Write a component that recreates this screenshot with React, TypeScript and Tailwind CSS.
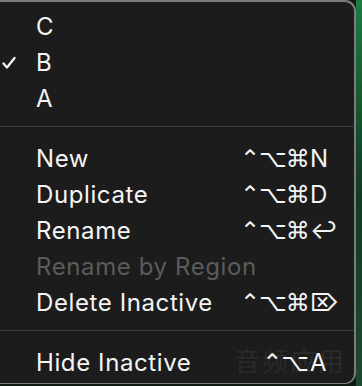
import React from "react";

type Item = {
  label: string;
  mods?: string;
  keyGlyph?: string;
  disabled?: boolean;
  checked?: boolean;
};

const versions: Item[] = [
  { label: "C" },
  { label: "B", checked: true },
  { label: "A" },
];

const actions: Item[] = [
  { label: "New", mods: "⌃⌥⌘", keyGlyph: "N" },
  { label: "Duplicate", mods: "⌃⌥⌘", keyGlyph: "D" },
  { label: "Rename", mods: "⌃⌥⌘", keyGlyph: "↩" },
  { label: "Rename by Region", disabled: true },
  { label: "Delete Inactive", mods: "⌃⌥⌘", keyGlyph: "⌦" },
];

const view: Item[] = [{ label: "Hide Inactive", mods: "⌃⌥", keyGlyph: "A" }];

function Check() {
  return (
    <svg width="14" height="14" viewBox="0 0 14 14" fill="none">
      <path d="M1.5 7.5 L5 11.5 L12.5 2" stroke="#f4f4f4" strokeWidth="2.3" strokeLinecap="round" strokeLinejoin="round" />
    </svg>
  );
}

function Row({ item }: { item: Item }) {
  return (
    <div className="flex h-[36px] items-center pr-[6px]">
      <div className="flex w-[36px] items-center pl-[2px]">{item.checked && <Check />}</div>
      <div
        className={`flex-1 whitespace-nowrap tracking-[0.6px] ${
          item.disabled ? "text-[#5b5b5b]" : "text-[#f4f4f4]"
        }`}
      >
        {item.label}
      </div>
      {item.mods && (
        <div className="flex items-center text-[#f4f4f4]">
          <span className="w-[68px] text-right font-['DejaVu_Sans',sans-serif] text-[24px] tracking-[-1px]">
            {item.mods}
          </span>
          <span className="ml-[2px] w-[38px] text-left">{item.keyGlyph}</span>
        </div>
      )}
    </div>
  );
}

function Separator() {
  return (
    <div className="pt-[9px] pb-[14px]">
      <div className="h-px bg-[#3c3c3c]" />
    </div>
  );
}

export default function App() {
  return (
    <div className="relative flex h-[386px] w-[362px] overflow-hidden bg-[#0f1a13] font-['Inter',sans-serif] text-[24px] leading-none">
      <div className="relative h-[384px] w-[356px] shrink-0 rounded-tr-[11px] rounded-br-[11px] border-t-2 border-r-2 border-b border-[#7c7c7c] bg-[#1c1c1c] pt-[7px]">
        {/* faint app text behind the translucent menu */}
        <div className="pointer-events-none absolute left-[234px] top-[345px] font-['Noto_Sans_CJK_SC',sans-serif] text-[26px] tracking-[2px] text-[#2a2a2a]">
          音频应用
        </div>
        <div className="relative">
          {versions.map((v) => (
            <Row key={v.label} item={v} />
          ))}
          <Separator />
          {actions.map((a) => (
            <Row key={a.label} item={a} />
          ))}
          <Separator />
          {view.map((a) => (
            <Row key={a.label} item={a} />
          ))}
        </div>
      </div>
      <div className="flex-1 bg-gradient-to-b from-[#1e7a44] via-[#123a22] to-[#1d4a2c]" />
    </div>
  );
}
